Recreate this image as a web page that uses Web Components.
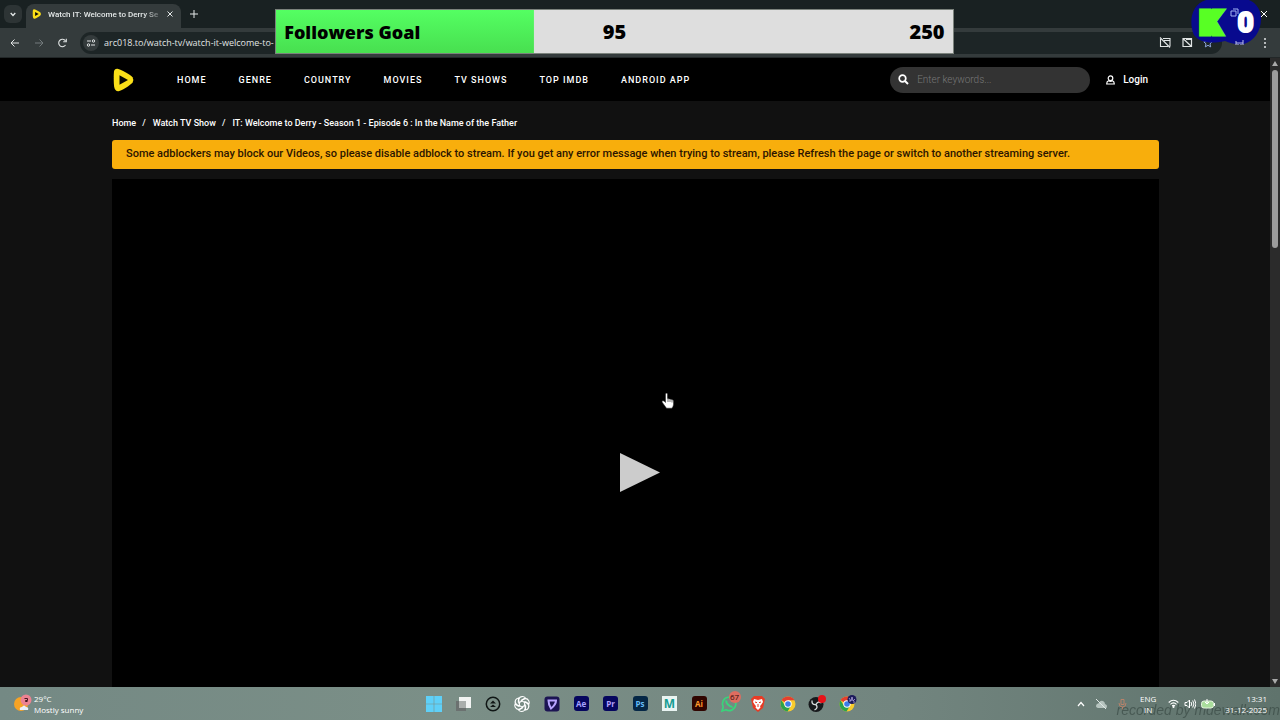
<!DOCTYPE html>
<html lang="en">
<head>
<meta charset="utf-8">
<title>Watch IT: Welcome to Derry Season 1</title>
<style>
  html, body { height: 100%; margin: 0; }
  body { background: #111; font-family: Roboto, "Liberation Sans", sans-serif; overflow: hidden; }
</style>
</head>
<body>
<desktop-screen></desktop-screen>

<template id="t-desktop-screen">
  <style>
    :host { display: flex; flex-direction: column; height: 100vh; position: relative; }
    stream-page { flex: 1; min-height: 0; }
    goal-bar { position: absolute; top: 9px; left: 21.5%; width: 53%; }
    score-badge { position: absolute; top: 0; right: 17px; }
    mouse-hand { position: absolute; top: 392px; left: 661px; }
  </style>
  <browser-tabs></browser-tabs>
  <browser-toolbar></browser-toolbar>
  <stream-page></stream-page>
  <task-bar></task-bar>
  <goal-bar><span slot="label">Followers Goal</span><span slot="now">95</span><span slot="goal">250</span></goal-bar>
  <score-badge></score-badge>
  <mouse-hand></mouse-hand>
</template>

<template id="t-browser-tabs">
  <style>
    :host { display: flex; align-items: center; height: 28px; background: #192122; color: #e4e8e8; font: 500 8px Roboto, sans-serif; padding: 0 9px 0 4px; box-sizing: border-box; }
    button { border: 0; background: none; color: inherit; padding: 0; display: flex; align-items: center; justify-content: center; }
    .list { width: 18px; height: 18px; border-radius: 6px; background: #2d3435; }
    .tab { display: flex; align-items: center; gap: 6px; width: 155px; height: 24px; box-sizing: border-box; padding: 0 8px 4px 6px; margin-left: 4px; background: #343b3c; border-radius: 8px 8px 0 0; align-self: flex-end; }
    .title { flex: 1; white-space: nowrap; -webkit-mask-image: linear-gradient(90deg, #000 85%, #0003); mask-image: linear-gradient(90deg, #000 85%, #0003); }
    .new { margin-left: 9px; }
    .space { flex: 1; }
  </style>
  <button class="list" aria-label="Search tabs"><svg width="6" height="5" viewBox="0 0 6 5"><path d="M.7 1 3 3.5 5.300 1" fill="none" stroke="currentColor" stroke-width="1.300"/></svg></button>
  <div class="tab">
    <play-logo style="--size:10px"></play-logo>
    <span class="title">Watch IT: Welcome to Derry Se</span>
    <button aria-label="Close tab"><svg width="6" height="6" viewBox="0 0 6 6"><path d="M.5.5l5 5m0-5-5 5" stroke="currentColor"/></svg></button>
  </div>
  <button class="new" aria-label="New tab"><svg width="8" height="8" viewBox="0 0 8 8"><path d="M4 0v8M0 4h8" stroke="currentColor"/></svg></button>
  <span class="space"></span>
  <button aria-label="Close window"><svg width="14" height="8" viewBox="0 0 14 8"><path d="m4 1 6 6m0-6-6 6" stroke="#fff"/></svg></button>
</template>

<template id="t-browser-toolbar">
  <style>
    :host { display: flex; align-items: center; height: 30px; box-sizing: border-box; border-bottom: 1px solid #222728; background: #343b3c; color: #e0e4e4; font: 9px "Open Sans", sans-serif; padding: 0 11px 0 9px; }
    button { border: 0; background: none; color: inherit; padding: 0; display: flex; align-items: center; justify-content: center; }
    .nav { display: flex; gap: 12px; }
    .nav :nth-child(2) { color: #737b7c; }
    .bar { flex: 1; display: flex; align-items: center; height: 22px; margin: 0 39px 0 12px; border-radius: 11px; background: #1d2526; padding: 0 9px 0 3px; }
    .site { width: 16px; height: 16px; border-radius: 8px; background: #343b3c; }
    input { flex: 1; min-width: 0; border: 0; background: none; color: inherit; font: inherit; padding: 0; margin-left: 5px; outline: 0; }
    .right { display: flex; gap: 10px; }
  </style>
  <div class="nav">
    <button aria-label="Back"><svg width="12" height="10" viewBox="0 0 12 10"><path d="M10 5H2m3.500-3.500L2 5l3.500 3.500" fill="none" stroke="currentColor"/></svg></button>
    <button aria-label="Forward"><svg width="12" height="10" viewBox="0 0 12 10"><path d="M2 5h8M6.500 1.500 10 5 6.500 8.500" fill="none" stroke="currentColor"/></svg></button>
    <button aria-label="Reload"><svg width="11" height="10" viewBox="0 0 11 10"><path d="M8.500 7A3.700 3.700 0 1 1 8.400 2.800M9.300.800v3H6.200" fill="none" stroke="currentColor" stroke-width="1.100"/></svg></button>
  </div>
  <div class="bar">
    <button class="site" aria-label="Site information"><svg width="10" height="8" viewBox="0 0 10 8"><path d="M1 2h4M5 6h4" stroke="currentColor"/><circle cx="7.500" cy="2" r="1.200" fill="none" stroke="currentColor"/><circle cx="2.500" cy="6" r="1.200" fill="none" stroke="currentColor"/></svg></button>
    <input aria-label="Address" value="arc018.to/watch-tv/watch-it-welcome-to-">
    <div class="right">
      <button aria-label="Camera blocked"><svg width="12" height="11" viewBox="0 0 12 11"><path d="M4 1.500h7v8M1.500 2v7.500H9M1 .500l10 10M5 3.500h6" fill="none" stroke="currentColor" stroke-width="1.100"/></svg></button>
      <button aria-label="Pop-up blocked"><svg width="12" height="11" viewBox="0 0 12 11"><path d="M2 1.500h8.500v8H2zM2 1.500l8.500 8M5 2.500h5" fill="none" stroke="currentColor" stroke-width="1.200"/></svg></button>
      <button aria-label="Bookmark"><svg width="10" height="10" viewBox="0 0 10 10"><path d="m5 .8 1.200 2.800 3 .2L7 5.900l.7 3L5 7.300 2.300 8.900l.7-3L.8 3.800l3-.2z" fill="none" stroke="#8fa6dc"/></svg></button>
    </div>
  </div>
  <button aria-label="Menu"><svg width="8" height="10" viewBox="0 0 8 10" fill="currentColor"><circle cx="4" cy="1" r="1"/><circle cx="4" cy="5" r="1"/><circle cx="4" cy="9" r="1"/></svg></button>
</template>

<template id="t-play-logo">
  <style>:host { display: block; line-height: 0; } svg { width: var(--size, 24px); height: var(--size, 24px); }</style>
  <svg viewBox="0 0 24 24"><path d="M2 3.500Q2.500.5 5.500.8C9 1.500 18 6.500 20.500 9.200q1.800 2.800 0 5.600C18 17.500 10 22.500 6.500 23.300 4 23.500 2.700 21.500 2.200 19 1.600 15 1.600 7 2 3.500z" fill="#fbe018"/><path d="M7.500 7.200v9.600L16 12z" fill="#090900"/></svg>
</template>

<template id="t-goal-bar">
  <style>
    :host { display: grid; grid-template-columns: 1fr 1fr 1fr; align-items: center; height: 45px; box-sizing: border-box; padding: 0 8px; border: 1px solid #7b827c; background: linear-gradient(#54ff62, #48df50) 0 0 / 38.1% 100% no-repeat, #dedede; color: #000; font: 800 20px "Open Sans", sans-serif; white-space: nowrap; }
    .label { font-size: 18px; }
    .now { text-align: center; }
    .goal { text-align: right; }
  </style>
  <div class="label"><slot name="label"></slot></div><div class="now"><slot name="now"></slot></div><div class="goal"><slot name="goal"></slot></div>
</template>

<template id="t-score-badge">
  <style>
    :host { display: flex; width: 72px; height: 45px; position: relative; }
    .blob { position: absolute; inset: 0; }
    .text { position: relative; display: flex; align-items: center; gap: 18px; padding: 0 7px 0 10px; color: #fff; font: 900 30px/42px Roboto, sans-serif; }
    .k { color: #58ff24; -webkit-text-stroke: 7px #58ff24; font-size: 29px; }
    .n { -webkit-text-stroke: 2px #fff; font-size: 28px; }
  </style>
  <svg class="blob" viewBox="0 0 72 45" aria-hidden="true"><path d="M15 0h43c7 3 12 9 12 19 0 12-7 22-17 25-8 1-14-1-19-3C20 44 9 43 3 35-2 24-1 5 15 0z" fill="#080a8e"/><path d="M40 11h5v5h-5zM42 9h5v5" fill="none" stroke="#a2b5f5"/><path d="M45 41v5m0-3h7m0-3v6m-5-2v4m3-4v4" stroke="#bbc0e8" fill="none"/></svg>
  <div class="text"><span class="k">K</span><span class="n">0</span></div>
</template>

<template id="t-mouse-hand">
  <style>:host { display: block; line-height: 0; }</style>
  <svg width="14" height="18" viewBox="0 0 14 18" aria-hidden="true"><path d="M4.500 2q1-2 2 0v4.500l5 1.200q1 .3 1 1.500v3q0 2-1.500 4H5.500L1 10q0-2 2-1l1.500 1.500z" fill="#fff" stroke="#222" stroke-width=".5"/><path d="M7 7v3m2-2.500V10m2-2v2.500" stroke="#333" stroke-width=".7"/></svg>
</template>

<template id="t-stream-page">
  <style>
    :host { display: flex; background: #111; overflow: hidden; }
    .view { flex: 1; min-width: 0; display: flex; flex-direction: column; }
    main { flex: 1; min-height: 0; display: flex; flex-direction: column; padding: 0 111px 0 112px; }
    crumb-trail { margin: 15px 0 9px; }
    notice-bar { margin-bottom: 10px; }
    video-box { flex: 1; }
  </style>
  <div class="view">
    <site-header></site-header>
    <main>
      <crumb-trail></crumb-trail>
      <notice-bar>Some adblockers may block our Videos, so please disable adblock to stream. If you get any error message when trying to stream, please Refresh the page or switch to another streaming server.</notice-bar>
      <video-box></video-box>
    </main>
  </div>
  <scroll-rail></scroll-rail>
</template>

<template id="t-site-header">
  <style>
    :host { display: flex; align-items: center; height: 43px; background: #000; padding: 0 122px 0 112px; color: #fff; }
    a { color: inherit; text-decoration: none; white-space: nowrap; }
    nav { display: flex; gap: 32px; margin-left: 41px; font-size: 9px; font-weight: 500; letter-spacing: 1px; }
    form { display: flex; align-items: center; gap: 8px; width: 200px; height: 26px; margin: 0 16px 0 auto; padding: 0 9px 0 8px; box-sizing: border-box; border-radius: 13px; background: #333; }
    input { flex: 1; min-width: 0; border: 0; padding: 0; outline: 0; background: none; color: #fff; font: 300 10px Roboto, sans-serif; }
    input::placeholder { color: #777; opacity: 1; }
    .login { display: flex; align-items: center; gap: 8px; font-size: 10px; font-weight: 500; }
  </style>
  <a href="#" aria-label="Start page"><play-logo></play-logo></a>
  <nav><a href="#">HOME</a><a href="#">GENRE</a><a href="#">COUNTRY</a><a href="#">MOVIES</a><a href="#">TV SHOWS</a><a href="#">TOP IMDB</a><a href="#">ANDROID APP</a></nav>
  <form><svg width="11" height="11" viewBox="0 0 11 11" aria-hidden="true"><circle cx="4.500" cy="4.500" r="3.300" fill="none" stroke="#fff" stroke-width="1.700"/><path d="m7 7 3 3" stroke="#fff" stroke-width="2"/></svg><input type="search" aria-label="Search" placeholder="Enter keywords..."></form>
  <a class="login" href="#"><svg width="9" height="10" viewBox="0 0 9 10" aria-hidden="true"><circle cx="4.500" cy="3.200" r="2.300" fill="none" stroke="#fff" stroke-width="1.200"/><path d="M2.500 5.700Q.7 6.300.7 9h7.600q0-2.700-1.800-3.300Q4.500 7 2.500 5.700z" fill="none" stroke="#fff" stroke-width="1.200"/></svg>Login</a>
</template>

<template id="t-crumb-trail">
  <style>
    :host { display: block; font-size: 9px; font-weight: 500; line-height: 15px; color: #fff; }
    nav { display: flex; gap: 6px; white-space: nowrap; }
    a { color: inherit; text-decoration: none; }
    i { font-style: normal; margin-right: 1px; }
  </style>
  <nav aria-label="Breadcrumb"><a href="#">Home</a><i>/</i><a href="#">Watch TV Show</a><i>/</i><span>IT: Welcome to Derry - Season 1 - Episode 6 : In the Name of the Father</span></nav>
</template>

<template id="t-notice-bar">
  <style>:host { display: block; box-sizing: border-box; padding: 6px 14px 7px; border-radius: 3px; background: #f8ae0c; color: #2c1500; font-size: 11px; line-height: 16px; font-weight: 500; }</style>
  <slot></slot>
</template>

<template id="t-video-box">
  <style>
    :host { display: flex; justify-content: center; background: #000; padding: 274px 0 0 9px; box-sizing: border-box; }
    button { border: 0; padding: 0; background: none; height: 40px; line-height: 0; }
  </style>
  <button aria-label="Play"><svg width="40" height="40" viewBox="0 0 40 40"><path d="M0 0v39l40-19.500z" fill="#ccc"/></svg></button>
</template>

<template id="t-scroll-rail">
  <style>
    :host { display: flex; flex-direction: column; align-items: center; width: 10px; background: #2b2b2b; padding: 3px 0; box-sizing: border-box; gap: 3px; }
    .thumb { width: 6px; height: 178px; border-radius: 3px; background: #9c9c9c; }
    svg:last-child { margin-top: auto; }
  </style>
  <svg width="8" height="6" viewBox="0 0 8 6"><path d="m4 0 3 5H1z" fill="#aaa"/></svg>
  <div class="thumb"></div>
  <svg width="8" height="6" viewBox="0 0 8 6"><path d="m4 6 3-5H1z" fill="#aaa"/></svg>
</template>

<template id="t-task-bar">
  <style>
    :host { display: grid; grid-template-columns: 1fr auto 1fr; align-items: center; height: 33px; position: relative; background: linear-gradient(90deg, #748984, #7b8f87 35%, #72857f 70%, #5f736c); color: #fff; font: 8px/11px "Open Sans", sans-serif; }
    .weather { display: flex; align-items: center; gap: 2px; padding-left: 13px; }
    .apps { display: flex; width: 433px; justify-content: space-between; align-items: center; }
    .apps button { padding: 0; border: 0; background: none; width: 20px; height: 20px; position: relative; color: inherit; line-height: 0; }
    .apps b { position: absolute; right: -2px; top: -3px; width: 12px; height: 12px; border-radius: 6px; background: #df6d60; color: #350b08; font: 8px/12px "Open Sans", sans-serif; }
    .tile { display: flex; align-items: center; justify-content: center; width: 15px; height: 15px; margin: auto; border-radius: 3px; background: var(--bg); color: var(--fg); font: 700 8px/15px "Open Sans", sans-serif; }
    .m { font-size: 12px; border-radius: 0; }
    .tray { display: flex; justify-content: flex-end; align-items: center; padding-right: 13px; position: relative; }
    .icons { display: flex; gap: 10px; align-items: center; margin-right: 13px; }
    .lang { text-align: center; margin-right: 12px; position: relative; }
    .net { display: flex; gap: 5px; align-items: center; margin-right: 10px; position: relative; }
    .time { text-align: right; position: relative; }
    .mark { position: absolute; right: 0; bottom: -3px; color: #34443f; opacity: .6; font: italic 14px/16px "Liberation Sans", sans-serif; white-space: nowrap; }
  </style>
  <div class="weather">
    <svg width="19" height="19" viewBox="0 0 19 19" aria-hidden="true"><circle cx="8" cy="10" r="7" fill="#f7a325"/><circle cx="13" cy="6" r="5.500" fill="#ec8292"/><path d="M11.500 4.500h3v2h-2v1h2" stroke="#451720" fill="none"/><path d="M7 16q-1-3 2-3 2-3 4 0 3 0 2 3z" fill="#e9effa"/></svg>
    <div>29°C<br>Mostly sunny</div>
  </div>
  <div class="apps">
    <button aria-label="Start"><svg width="18" height="18" viewBox="0 0 18 18"><path d="M1 1h7.700v7.700H1zM9.300 1H17v7.700H9.300zM1 9.300h7.700V17H1zM9.300 9.300H17V17H9.300z" fill="#5fd0f8"/></svg></button>
    <button aria-label="Task view"><svg width="18" height="18" viewBox="0 0 18 18"><path d="M5 2h12v11H5z" fill="#f1f3f2"/><path d="M2 6h10v10H2z" fill="#6b7170"/><path d="M5 6h7v7H5z" fill="#a9aeac"/></svg></button>
    <button aria-label="Launcher"><svg width="18" height="18" viewBox="0 0 18 18"><circle cx="9" cy="9" r="6.700" fill="none" stroke="#101615" stroke-width="1.500"/><path d="m6 8.500 3-3 3 3zM6 12l3-2.500 3 2.500z" fill="#101615"/></svg></button>
    <button aria-label="Assistant"><svg width="18" height="18" viewBox="0 0 18 18"><g fill="none" stroke="#fff" stroke-width="1.100"><path d="M9 6 5.800 7.800V4.500q.5-3 3.700-3 1.800 0 3 1.500L8.500 5"/><path d="M9 6 5.800 7.800V4.500q.5-3 3.700-3 1.800 0 3 1.500L8.500 5" transform="rotate(60 9 9)"/><path d="M9 6 5.800 7.800V4.500q.5-3 3.700-3 1.800 0 3 1.500L8.500 5" transform="rotate(120 9 9)"/><path d="M9 6 5.800 7.800V4.500q.5-3 3.700-3 1.800 0 3 1.500L8.500 5" transform="rotate(180 9 9)"/><path d="M9 6 5.800 7.800V4.500q.5-3 3.700-3 1.800 0 3 1.500L8.500 5" transform="rotate(240 9 9)"/><path d="M9 6 5.800 7.800V4.500q.5-3 3.700-3 1.800 0 3 1.500L8.500 5" transform="rotate(300 9 9)"/></g></svg></button>
    <button aria-label="Video editor"><svg width="18" height="18" viewBox="0 0 18 18"><rect x="1.500" y="1.500" width="15" height="15" rx="3" fill="#1c1453"/><path d="M5.500 5.500h7.500q0 4-5 8-2.500-4-2.500-8z" fill="none" stroke="#b8a5ff" stroke-width="2"/></svg></button>
    <button><span class="tile" style="--bg:#06065e;--fg:#a6a3ff">Ae</span></button>
    <button><span class="tile" style="--bg:#06065e;--fg:#b6a2ff">Pr</span></button>
    <button><span class="tile" style="--bg:#052746;--fg:#66bdf8">Ps</span></button>
    <button><span class="tile m" style="--bg:#e9f4f2;--fg:#159c92">M</span></button>
    <button><span class="tile" style="--bg:#300500;--fg:#ff9a2a">Ai</span></button>
    <button aria-label="Chat"><svg width="18" height="18" viewBox="0 0 18 18"><path d="m2 16 1.200-4A6.700 6.700 0 1 1 6 14.800z" fill="none" stroke="#39d47b" stroke-width="1.700"/><path d="M6.500 5.500q-1 2 2 4.500t4 1.500" fill="none" stroke="#39d47b" stroke-width="2"/></svg><b>67</b></button>
    <button aria-label="Brave"><svg width="18" height="18" viewBox="0 0 18 18"><path d="M5 1h8l3 3-2 9-5 4-5-4-2-9z" fill="#e73b25"/><path d="m5 4 4 1 4-1 1 3-2 3-1 1 .5 1.500L9 15l-2.500-2.500L7 11 6 10 4 7z" fill="#fff"/><path d="m6 7 2 .7M12 7l-2 .7M9 9v3" stroke="#e73b25"/></svg></button>
    <button aria-label="Chrome"><chrome-mark></chrome-mark></button>
    <button aria-label="OBS"><svg width="20" height="18" viewBox="0 0 20 18"><circle cx="9" cy="9.500" r="7.500" fill="#17191b"/><g fill="none" stroke="#d7dcdc" stroke-width="1.300"><path d="M9 9.500Q4.500 10 5 5.500"/><path d="M9 9.500Q4.500 10 5 5.500" transform="rotate(120 9 9.500)"/><path d="M9 9.500Q4.500 10 5 5.500" transform="rotate(240 9 9.500)"/></g><circle cx="15" cy="4" r="4" fill="#e71319"/></svg></button>
    <button aria-label="Chrome profile"><chrome-mark profile></chrome-mark></button>
  </div>
  <div class="tray">
    <span class="mark">recorded by mdewalk.com</span>
    <div class="icons">
      <svg width="8" height="6" viewBox="0 0 8 6"><path d="m1 5 3-3.500L7 5" fill="none" stroke="#fff" stroke-width="1.200"/></svg>
      <svg width="13" height="10" viewBox="0 0 13 10"><path d="M3 9Q0 8 1.500 5.500 3 4 4 4q1-3 4-2 2 1 2 3 3 1 1.500 4z" fill="#b6c4bf"/><path d="m1 0 10 10" stroke="#dfe8e5"/></svg>
      <svg width="9" height="12" viewBox="0 0 9 12"><path d="M3 1.500h3v5H3zM1 5q0 4 3.500 4T8 5M4.500 9v3" fill="none" stroke="#b9826a"/></svg>
    </div>
    <div class="lang">ENG<br>IN</div>
    <div class="net">
      <svg width="11" height="9" viewBox="0 0 11 9"><path d="M.7 3.500q4.800-4.500 9.600 0M2.500 5.300q3-2.800 6 0M4 7q1.500-1.300 3 0" fill="none" stroke="#fff" stroke-width="1.100"/><circle cx="5.500" cy="8" r="1" fill="#fff"/></svg>
      <svg width="12" height="10" viewBox="0 0 12 10"><path d="M1 3.500h2L5.500 1v8L3 6.500H1zM7 3q1.500 2 0 4M8.700 1.500q2.500 3.500 0 7M10.500.500q3 4.500 0 9" fill="none" stroke="#fff"/></svg>
      <svg width="14" height="10" viewBox="0 0 14 10"><rect x=".5" y="2" width="12" height="7" rx="2.500" fill="#a9dd9c" stroke="#e4f3df"/><path d="M13.500 4v3M6 0v5M4 3l2 2 2-2" stroke="#fff" fill="none"/></svg>
    </div>
    <div class="time">13:31<br>31-12-2025</div>
  </div>
</template>

<template id="t-chrome-mark">
  <style>:host { display: block; line-height: 0; } .who { display: none; } :host([profile]) .who { display: block; }</style>
  <svg width="20" height="18" viewBox="0 0 20 18"><circle cx="10" cy="9" r="7.500" fill="#f8cc2d"/><path d="M10 9 3.500 5.300A7.500 7.500 0 0 1 16.500 5.300H10z" fill="#e4402f"/><path d="M3.500 5.300A7.500 7.500 0 0 0 9.500 16.500L13 10.700 10 9 7 10.700z" fill="#2ba24c"/><circle cx="10" cy="9" r="3.700" fill="#fff"/><circle cx="10" cy="9" r="2.800" fill="#3d7de8"/><g class="who"><circle cx="15" cy="4.500" r="4.500" fill="#1c1a5c"/><path d="m12 3 2 3 1-4 1 4 2-2M12 6h2m2 1h2" stroke="#b5a8e0" fill="none" stroke-width=".8"/></g></svg>
</template>

<script>
  const names = ['desktop-screen', 'browser-tabs', 'browser-toolbar', 'play-logo', 'goal-bar', 'score-badge', 'mouse-hand', 'stream-page', 'site-header', 'crumb-trail', 'notice-bar', 'video-box', 'scroll-rail', 'task-bar', 'chrome-mark'];
  for (const name of names) {
    customElements.define(name, class extends HTMLElement {
      constructor() {
        super();
        this.attachShadow({ mode: 'open' }).append(document.getElementById('t-' + name).content.cloneNode(true));
      }
    });
  }
</script>
</body>
</html>
